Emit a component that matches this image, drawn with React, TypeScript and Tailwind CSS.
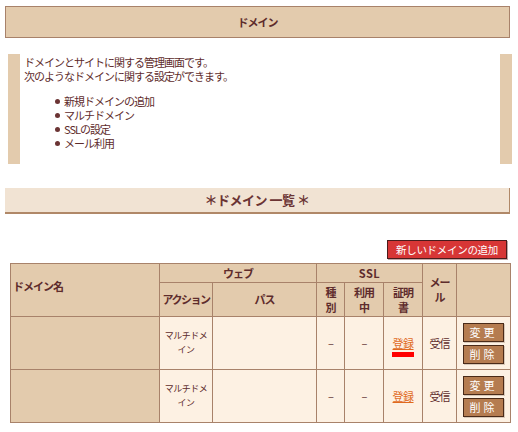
const font = { fontFamily: '"Noto Sans CJK JP", "Liberation Sans", sans-serif' };

function SmallButton({ label }: { label: string }) {
  return (
    <button className="block h-[19px] w-[41px] whitespace-nowrap border border-[#4a2a18] bg-[#b57c50] text-[11px] leading-[17px] tracking-[3px] text-white shadow-[1px_1px_0_#d8c8b8]">
      {label}
    </button>
  );
}

function DataRow({ marked }: { marked?: boolean }) {
  const td = 'border border-[#a8826a] bg-[#fdf1e3] text-center align-middle';
  return (
    <tr className="h-[53px]">
      <td className="border border-[#a8826a] bg-[#e3cbad]"></td>
      <td className={`${td} text-[9px] leading-[14px] tracking-[-0.5px]`}>マルチドメ<br />イン</td>
      <td className={td}></td>
      <td className={td}>–</td>
      <td className={td}>–</td>
      <td className={td}>
        <a className="relative inline-block text-[11px] tracking-[-0.5px] text-[#e06a1e] underline">
          登録
          {marked && <span className="absolute left-[-1px] top-[16px] h-[5px] w-[22px] bg-[#ff0000]" />}
        </a>
      </td>
      <td className={`${td} text-[11px] tracking-[-1px]`}>受信</td>
      <td className={`${td} px-[6px]`}>
        <div className="flex flex-col gap-[3px]">
          <SmallButton label="変更" />
          <SmallButton label="削除" />
        </div>
      </td>
    </tr>
  );
}

export default function App() {
  const th = 'whitespace-nowrap border border-[#a8826a] bg-[#e3cbad] text-center align-middle font-bold';
  return (
    <div className="min-h-[432px] bg-white text-[11px] tracking-[-1px] text-[#5e2c2c]" style={font}>
      <div className="w-[510px] pl-[5px] pt-[6px]">
        <div className="flex h-[32px] items-center justify-center border border-[#a8826a] bg-[#e3cbad] text-[11px] font-bold">
          ドメイン
        </div>

        <div className="mx-[3px] mt-[16px] flex h-[110px] w-[504px]">
          <div className="w-[12px] bg-[#e3cbad]" />
          <div className="flex-1 pl-[4px] pt-[1px] leading-[14px]">
            <p>ドメインとサイトに関する管理画面です。</p>
            <p>次のようなドメインに関する設定ができます。</p>
            <ul className="mt-[11px] pl-[31px]">
              {['新規ドメインの追加', 'マルチドメイン', 'SSLの設定', 'メール利用'].map((t) => (
                <li key={t} className="flex items-center">
                  <span className="mr-[4px] inline-block h-[5px] w-[5px] rounded-full bg-[#6b3434]" />
                  {t}
                </li>
              ))}
            </ul>
          </div>
          <div className="w-[12px] bg-[#e3cbad]" />
        </div>

        <div className="mt-[24px] flex h-[26px] items-center justify-center border-b-2 border-r border-[#b08868] bg-[#f1e3d3] text-[13px] font-bold tracking-[-0.5px] text-[#6b3434]">
          ＊ドメイン 一覧 ＊
        </div>

        <div className="mt-[26px] flex justify-end pr-[3px]">
          <button className="h-[19px] w-[120px] whitespace-nowrap border border-[#4a1c1c] bg-[#d73636] text-[10.5px] leading-[17px] tracking-[-0.3px] text-white shadow-[1px_1px_0_#c0a8a8]">
            新しいドメインの追加
          </button>
        </div>

        <table className="ml-[5px] mt-[4px] w-[500px] table-fixed border-collapse border border-[#a8826a] text-[11px] leading-[15px]">
          <colgroup>
            <col className="w-[149px]" />
            <col className="w-[53px]" />
            <col className="w-[104px]" />
            <col className="w-[28px]" />
            <col className="w-[39px]" />
            <col className="w-[39px]" />
            <col className="w-[34px]" />
            <col className="w-[54px]" />
          </colgroup>
          <thead>
            <tr className="h-[19px]">
              <th rowSpan={2} className={`${th} pb-[8px] pl-[2px] text-left`}>ドメイン名</th>
              <th colSpan={2} className={th}>ウェブ</th>
              <th colSpan={3} className={`${th} tracking-[0.5px]`}>SSL</th>
              <th rowSpan={2} className={th}>メー<br />ル</th>
              <th rowSpan={2} className={th}></th>
            </tr>
            <tr className="h-[34px]">
              <th className={`${th} tracking-[-1.5px]`}>アクション</th>
              <th className={th}>パス</th>
              <th className={th}>種<br />別</th>
              <th className={th}>利用<br />中</th>
              <th className={th}>証明<br />書</th>
            </tr>
          </thead>
          <tbody>
            <DataRow marked />
            <DataRow />
          </tbody>
        </table>
      </div>
    </div>
  );
}
